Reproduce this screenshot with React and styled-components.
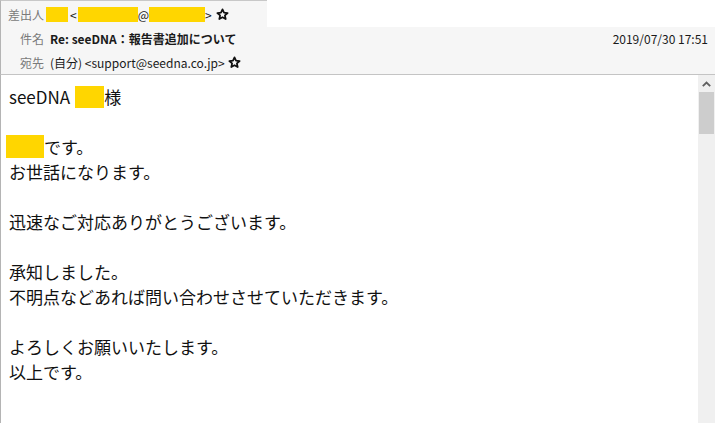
import React from 'react';
import styled, { createGlobalStyle } from 'styled-components';

const Global = createGlobalStyle`
  html, body {
    margin: 0;
    padding: 0;
    background: #ffffff;
    overflow: hidden;
  }
  body {
    font-family: 'Noto Sans CJK JP', 'Noto Sans', sans-serif;
    color: #111;
  }
`;

const Page = styled.div`
  width: 715px;
  height: 423px;
  display: flex;
  flex-direction: column;
  background: #fff;
`;

const Tab = styled.div`
  width: 267px;
  height: 27px;
  border-top: 1px solid #c8c8c8;
  border-left: 1px solid #b4b4b4;
  background: #f6f6f6;
  display: flex;
  align-items: center;
  padding-left: 7px;
  box-sizing: border-box;
`;

const Header = styled.div`
  height: 48px;
  background: #f6f6f6;
  border-left: 1px solid #b4b4b4;
  border-bottom: 1px solid #c4c4c4;
  display: flex;
  flex-direction: column;
  justify-content: space-around;
  padding: 0 7px 0 0;
  box-sizing: border-box;
`;

const Row = styled.div`
  display: flex;
  align-items: center;
  font-size: 12px;
  height: 22px;
`;

const Label = styled.span`
  width: ${p => p.$w || 43}px;
  text-align: right;
  color: #7a7a7a;
  flex-shrink: 0;
  margin-right: ${p => p.$gap || 6}px;
  white-space: nowrap;
`;

const Value = styled.span`
  color: #1a1a1a;
  font-weight: ${p => (p.$bold ? 700 : 400)};
  white-space: nowrap;
  display: flex;
  align-items: center;
`;

const DateText = styled.span`
  margin-left: auto;
  color: #1a1a1a;
  font-size: 12px;
`;

const Redact = styled.span`
  display: inline-block;
  background: #ffd600;
  width: ${p => p.$w}px;
  height: ${p => p.$h}px;
  margin: 0 ${p => p.$mr || 0}px 0 ${p => p.$ml || 0}px;
  vertical-align: middle;
`;

const StarBox = styled.span`
  display: inline-flex;
  margin-left: ${p => p.$ml || 3}px;
`;

const Star = ({ ml }) => (
  <StarBox $ml={ml}>
    <svg width="13" height="13" viewBox="0 0 24 24">
      <path
        d="M12 2.5l2.8 6.2 6.7.6-5.1 4.5 1.5 6.6L12 17l-5.9 3.4 1.5-6.6-5.1-4.5 6.7-.6z"
        fill="none"
        stroke="#111"
        strokeWidth="3.2"
        strokeLinejoin="round"
      />
    </svg>
  </StarBox>
);

const Body = styled.div`
  flex: 1;
  display: flex;
  border-left: 1px solid #b4b4b4;
  min-height: 0;
`;

const Message = styled.div`
  flex: 1;
  padding: 9px 8px 0 8px;
  font-size: 17px;
  line-height: 25px;
  color: #111;
`;

const Line = styled.div`
  height: 25px;
  display: flex;
  align-items: center;
  white-space: pre;
`;

const Scrollbar = styled.div`
  width: 17px;
  background: #f0f0f0;
  display: flex;
  flex-direction: column;
`;

const ArrowBtn = styled.div`
  height: 17px;
  display: flex;
  align-items: center;
  justify-content: center;
`;

const Thumb = styled.div`
  height: 42px;
  margin: 0 1px;
  background: #cdcdcd;
`;

export default function App() {
  const lines = [
    <>seeDNA<Redact $w={29} $h={22} $ml={5} />様</>,
    '',
    <><Redact $w={38} $h={23} $ml={-3} />です。</>,
    'お世話になります。',
    '',
    '迅速なご対応ありがとうございます。',
    '',
    '承知しました。',
    '不明点などあれば問い合わせさせていただきます。',
    '',
    'よろしくお願いいたします。',
    '以上です。',
  ];

  return (
    <>
      <Global />
      <Page>
        <Tab>
          <Row>
            <Label $w={36} $gap={2}>差出人</Label>
            <Value>
              <Redact $w={22} $h={15} />
              <span style={{ marginLeft: 2 }}>&lt;</span>
              <Redact $w={60} $h={15} $ml={1} />
              <span>@</span>
              <Redact $w={56} $h={15} />
              <span>&gt;</span>
              <Star ml={4} />
            </Value>
          </Row>
        </Tab>
        <Header>
          <Row>
            <Label>件名</Label>
            <Value $bold>Re: seeDNA：報告書追加について</Value>
            <DateText>2019/07/30 17:51</DateText>
          </Row>
          <Row>
            <Label>宛先</Label>
            <Value>
              (自分) &lt;support@seedna.co.jp&gt;
              <Star ml={3} />
            </Value>
          </Row>
        </Header>
        <Body>
          <Message>
            {lines.map((l, i) => (
              <Line key={i}>{l}</Line>
            ))}
          </Message>
          <Scrollbar>
            <ArrowBtn>
              <svg width="9" height="6" viewBox="0 0 9 6">
                <path d="M0.8 5.2L4.5 1.5l3.7 3.7" fill="none" stroke="#606060" strokeWidth="1.8" />
              </svg>
            </ArrowBtn>
            <Thumb />
          </Scrollbar>
        </Body>
      </Page>
    </>
  );
}
